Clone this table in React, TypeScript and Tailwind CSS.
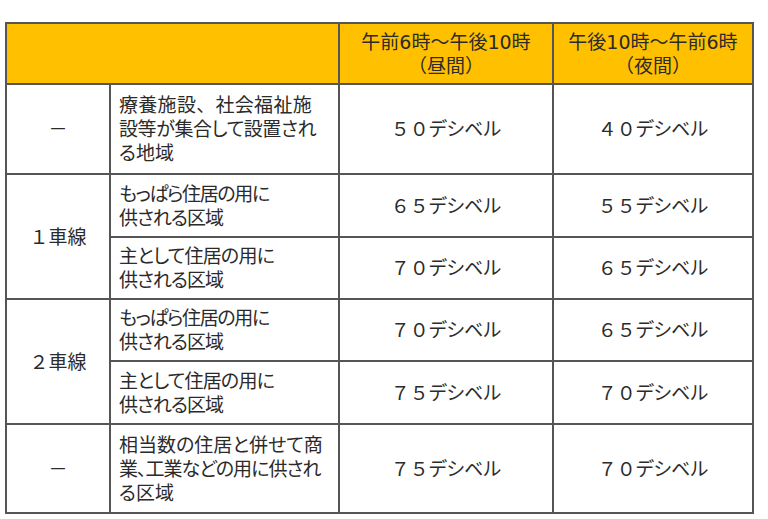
import React from "react";

const font = { fontFamily: '"DejaVu Sans", "Noto Sans CJK JP", sans-serif' };

const cell = "border-2 border-[#555555] text-[#2b2b2b]";
const desc = `${cell} pl-[8px] whitespace-nowrap [font-feature-settings:'palt']`;
const val = `${cell} text-center`;

function C() {
  return <span className="[font-feature-settings:normal]">、</span>;
}

function Db({ n }: { n: string }) {
  return (
    <>
      {n}
      <span className="[font-feature-settings:'palt']">デシベル</span>
    </>
  );
}

export default function App() {
  return (
    <div className="w-[768px] h-[519px] bg-white pt-[22px] pl-[5px]" style={font}>
      <table className="table-fixed border-collapse w-[747px] text-[19px] leading-[24px]">
        <colgroup>
          <col className="w-[104px]" />
          <col className="w-[229px]" />
          <col className="w-[214px]" />
          <col className="w-[200px]" />
        </colgroup>
        <thead>
          <tr className="h-[61px] bg-[#ffc000]">
            <th colSpan={2} className={cell}></th>
            <th className={`${cell} font-normal text-center`}>
              午前6時～午後10時
              <br />
              （昼間）
            </th>
            <th className={`${cell} font-normal text-center`}>
              午後10時～午前6時
              <br />
              （夜間）
            </th>
          </tr>
        </thead>
        <tbody>
          <tr className="h-[90px]">
            <td className={`${cell} text-center`}>－</td>
            <td className={desc}>
              <span className="tracking-[0.3px]">療養施設<C />社会福祉施</span>
              <br />
              <span className="tracking-[-0.4px]">設等が集合して設置され</span>
              <br />
              る地域
            </td>
            <td className={val}><Db n="５０" /></td>
            <td className={val}><Db n="４０" /></td>
          </tr>
          <tr className="h-[63px]">
            <td rowSpan={2} className={`${cell} text-center`}>１車線</td>
            <td className={desc}>
              <span className="tracking-[-1.4px]">もっぱら住居の用に</span>
              <br />
              <span className="tracking-[-1px]">供される区域</span>
            </td>
            <td className={val}><Db n="６５" /></td>
            <td className={val}><Db n="５５" /></td>
          </tr>
          <tr className="h-[62px]">
            <td className={desc}>
              <span className="tracking-[-0.8px]">主として住居の用に</span>
              <br />
              <span className="tracking-[-1px]">供される区域</span>
            </td>
            <td className={val}><Db n="７０" /></td>
            <td className={val}><Db n="６５" /></td>
          </tr>
          <tr className="h-[62px]">
            <td rowSpan={2} className={`${cell} text-center`}>２車線</td>
            <td className={desc}>
              <span className="tracking-[-1.4px]">もっぱら住居の用に</span>
              <br />
              <span className="tracking-[-1px]">供される区域</span>
            </td>
            <td className={val}><Db n="７０" /></td>
            <td className={val}><Db n="６５" /></td>
          </tr>
          <tr className="h-[63px]">
            <td className={desc}>
              <span className="tracking-[-0.8px]">主として住居の用に</span>
              <br />
              <span className="tracking-[-1px]">供される区域</span>
            </td>
            <td className={val}><Db n="７５" /></td>
            <td className={val}><Db n="７０" /></td>
          </tr>
          <tr className="h-[89px]">
            <td className={`${cell} text-center`}>－</td>
            <td className={desc}>
              相当数の住居と併せて商
              <br />
              <span className="tracking-[-1px]">業、工業などの用に供され</span>
              <br />
              る区域
            </td>
            <td className={val}><Db n="７５" /></td>
            <td className={val}><Db n="７０" /></td>
          </tr>
        </tbody>
      </table>
    </div>
  );
}
